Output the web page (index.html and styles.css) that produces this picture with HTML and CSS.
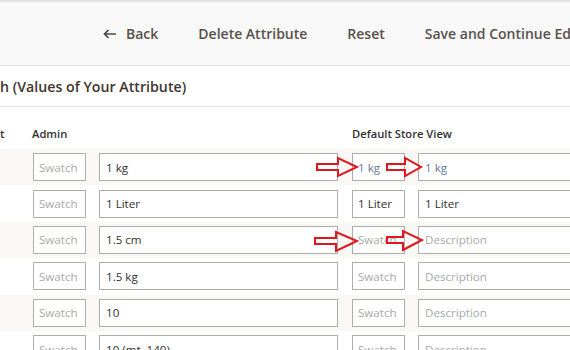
FILE: index.html
```html
<!DOCTYPE html>
<html>
<head>
<meta charset="utf-8">
<link rel="stylesheet" href="styles.css">
</head>
<body>
<div class="page">
  <div class="actions">
    <span class="btn back"><svg class="back-icon" width="14" height="10" viewBox="0 0 14 10"><path d="M13 5H1.5M5.5 1L1.5 5l4 4" fill="none" stroke="#514943" stroke-width="1.7"/></svg>Back</span>
    <span class="btn">Delete Attribute</span>
    <span class="btn">Reset</span>
    <span class="btn">Save and Continue Edit</span>
  </div>
  <div class="legend">h (Values of Your Attribute)</div>
  <div class="thead">
    <span class="th-cut">t</span>
    <span class="th-admin">Admin</span>
    <span class="th-store">Default Store View</span>
  </div>
  <div class="rows">
    <div class="row odd">
      <input class="sw" placeholder="Swatch">
      <input class="txt" value="1 kg">
      <input class="sw store blue" value="1 kg">
      <input class="desc blue" value="1 kg">
    </div>
    <div class="row">
      <input class="sw" placeholder="Swatch">
      <input class="txt" value="1 Liter">
      <input class="sw store" value="1 Liter">
      <input class="desc" value="1 Liter">
    </div>
    <div class="row odd">
      <input class="sw" placeholder="Swatch">
      <input class="txt" value="1.5 cm">
      <input class="sw store" placeholder="Swatch">
      <input class="desc" placeholder="Description">
    </div>
    <div class="row">
      <input class="sw" placeholder="Swatch">
      <input class="txt" value="1.5 kg">
      <input class="sw store" placeholder="Swatch">
      <input class="desc" placeholder="Description">
    </div>
    <div class="row odd">
      <input class="sw" placeholder="Swatch">
      <input class="txt" value="10">
      <input class="sw store" placeholder="Swatch">
      <input class="desc" placeholder="Description">
    </div>
    <div class="row">
      <input class="sw" placeholder="Swatch">
      <input class="txt" value="10 (mt. 140)">
      <input class="sw store" placeholder="Swatch">
      <input class="desc" placeholder="Description">
    </div>
  </div>
  <svg class="arrows" width="570" height="350" viewBox="0 0 570 350">
    <g fill="none" stroke="#e0171d" stroke-width="2" stroke-linejoin="miter">
      <polygon points="317,164 338,164 338,158 357,167 338,176 338,170 317,170"/>
      <polygon points="387,164 405,164 405,158 421,167 405,176 405,170 387,170"/>
      <polygon points="315,238 336,238 336,232 357,241 336,251 336,244 315,244"/>
      <polygon points="387,237 403,237 403,231 422,240 403,250 403,243 387,243"/>
    </g>
  </svg>
</div>
</body>
</html>
```
FILE: styles.css
```css
html, body {
  margin: 0;
  padding: 0;
  background: #ffffff;
}
body {
  font-family: "Open Sans", "DejaVu Sans", sans-serif;
  color: #303030;
}
.page {
  position: relative;
  width: 570px;
  height: 350px;
  overflow: hidden;
}
.actions {
  border-top: 2px solid #e3e3e3;
  border-bottom: 1px solid #e3e3e3;
  background: #f8f8f8;
  height: 63px;
  box-sizing: content-box;
  display: flex;
  align-items: center;
  gap: 40px;
  padding-left: 103px;
  white-space: nowrap;
}
.btn {
  font-size: 14px;
  font-weight: 600;
  color: #5a514b;
  display: inline-flex;
  align-items: center;
  flex: none;
}
.back-icon {
  margin-right: 9px;
}
.legend {
  height: 40px;
  border-bottom: 1px solid #e3e3e3;
  display: flex;
  align-items: center;
  font-size: 14.2px;
  font-weight: 600;
  color: #41362f;
  padding-left: 0;
}
.thead {
  height: 42px;
  display: flex;
  align-items: center;
  font-size: 11.2px;
  font-weight: 600;
  color: #303030;
  padding-top: 10px;
  box-sizing: border-box;
}
.th-cut {
  width: 32px;
}
.th-admin {
  width: 320px;
}
.rows {
  display: flex;
  flex-direction: column;
}
.row {
  height: 36.4px;
  display: flex;
  align-items: center;
  padding-left: 33px;
}
.row.odd {
  background: #f9f8f5;
}
input {
  box-sizing: border-box;
  height: 28px;
  border: 1px solid #adadad;
  background: #fff;
  font-family: "Open Sans", "DejaVu Sans", sans-serif;
  font-size: 11.6px;
  color: #303030;
  padding: 0 6px;
  margin: 0;
  flex: none;
  outline: none;
}
input::placeholder {
  color: #a9a9a9;
}
.sw {
  width: 53px;
  padding: 0 5px;
}
.txt {
  width: 239px;
  margin-left: 13px;
}
.store {
  margin-left: 14px;
}
.desc {
  width: 200px;
  margin-left: 13px;
}
.blue {
  color: #62799a;
}
.arrows {
  position: absolute;
  left: 0;
  top: 0;
  pointer-events: none;
}
```
